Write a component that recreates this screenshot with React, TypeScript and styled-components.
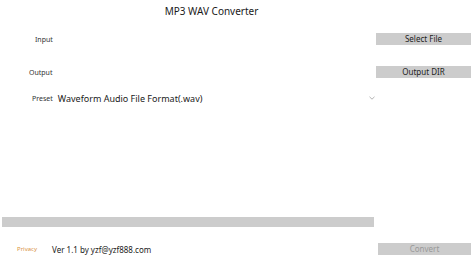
import styled, { createGlobalStyle } from "styled-components";

const GlobalStyle = createGlobalStyle`
    html, body {
        margin: 0;
        padding: 0;
        background: #ffffff;
    }
`;

export default function App() {
    return (
        <>
            <GlobalStyle />
            <Page>
                <Title>MP3 WAV Converter</Title>
                <Row $gap={11}>
                    <Label $indent={35}>Input</Label>
                    <ActionButton>Select File</ActionButton>
                </Row>
                <Row $gap={21}>
                    <Label $indent={29}>Output</Label>
                    <ActionButton>Output DIR</ActionButton>
                </Row>
                <Row $gap={14}>
                    <Label $indent={32}>Preset</Label>
                    <Select>
                        <SelectValue>Waveform Audio File Format(.wav)</SelectValue>
                        <Chevron viewBox="0 0 6 4">
                            <polyline points="0.5,0.8 3,3.2 5.5,0.8" />
                        </Chevron>
                    </Select>
                </Row>
                <Progress />
                <Footer>
                    <PrivacyLink>Privacy</PrivacyLink>
                    <Version>Ver 1.1 by yzf@yzf888.com</Version>
                    <ConvertButton disabled>Convert</ConvertButton>
                </Footer>
            </Page>
        </>
    );
}

const Page = styled.div`
    width: 471px;
    height: 265px;
    display: flex;
    flex-direction: column;
    font-family: "Noto Sans", "Open Sans", sans-serif;
    color: #222222;
    overflow: hidden;
`;

const Title = styled.h1`
    margin: 0;
    width: 423px;
    height: 22px;
    line-height: 22px;
    text-align: center;
    font-size: 10px;
    font-weight: 400;
    color: #1a1a1a;
`;

const Row = styled.div<{ $gap: number }>`
    display: flex;
    align-items: center;
    height: 12px;
    margin-top: ${p => p.$gap}px;
`;

const Label = styled.span<{ $indent: number }>`
    padding-left: ${p => p.$indent}px;
    font-size: 7px;
    color: #333333;
    flex: 0 0 auto;
`;

const ActionButton = styled.button`
    margin-left: auto;
    width: 95px;
    height: 12px;
    padding: 0;
    border: none;
    background: #cccccc;
    font-family: inherit;
    font-size: 8px;
    line-height: 12px;
    color: #222222;
`;

const Select = styled.div`
    display: flex;
    align-items: center;
    margin-left: 5px;
    width: 320px;
    height: 12px;
`;

const SelectValue = styled.span`
    font-size: 9px;
    color: #1a1a1a;
    flex: 1;
`;

const Chevron = styled.svg`
    width: 6px;
    height: 4px;
    margin-right: 3px;
    fill: none;
    stroke: #a0a0a0;
    stroke-width: 0.8;
`;

const Progress = styled.div`
    margin-top: 113px;
    margin-left: 2px;
    width: 372px;
    height: 10px;
    background: #cccccc;
`;

const Footer = styled.div`
    display: flex;
    align-items: center;
    height: 12px;
    margin-top: 16px;
`;

const PrivacyLink = styled.a`
    padding-left: 17px;
    font-size: 6px;
    color: #d9923f;
`;

const Version = styled.span`
    margin-left: 15px;
    font-size: 8px;
    color: #1a1a1a;
`;

const ConvertButton = styled.button`
    margin-left: auto;
    width: 93px;
    height: 12px;
    padding: 0;
    border: none;
    background: #cccccc;
    font-family: inherit;
    font-size: 8px;
    line-height: 12px;
    color: #999999;
`;
